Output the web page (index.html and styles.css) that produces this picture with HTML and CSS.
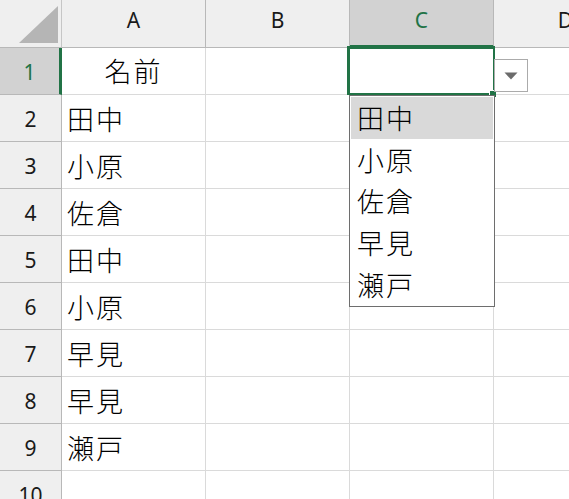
FILE: index.html
```html
<!DOCTYPE html>
<html lang="ja">
<head>
<meta charset="utf-8">
<title>Sheet</title>
<link rel="stylesheet" href="styles.css">
</head>
<body>
<div class="sheet">
  <div class="grid">
    <div class="cell corner"><svg class="corner-tri" width="61" height="47" viewBox="0 0 61 47"><polygon points="19,43 58,43 58,6" fill="#b5b5b5"/></svg></div>
    <div class="cell colhead">A</div>
    <div class="cell colhead">B</div>
    <div class="cell colhead sel">C</div>
    <div class="cell colhead">D</div>

    <div class="cell rowhead sel">1</div>
    <div class="cell center">名前</div>
    <div class="cell"></div>
    <div class="cell"></div>
    <div class="cell"></div>

    <div class="cell rowhead">2</div>
    <div class="cell">田中</div>
    <div class="cell"></div>
    <div class="cell"></div>
    <div class="cell"></div>

    <div class="cell rowhead">3</div>
    <div class="cell">小原</div>
    <div class="cell"></div>
    <div class="cell"></div>
    <div class="cell"></div>

    <div class="cell rowhead">4</div>
    <div class="cell">佐倉</div>
    <div class="cell"></div>
    <div class="cell"></div>
    <div class="cell"></div>

    <div class="cell rowhead">5</div>
    <div class="cell">田中</div>
    <div class="cell"></div>
    <div class="cell"></div>
    <div class="cell"></div>

    <div class="cell rowhead">6</div>
    <div class="cell">小原</div>
    <div class="cell"></div>
    <div class="cell"></div>
    <div class="cell"></div>

    <div class="cell rowhead">7</div>
    <div class="cell">早見</div>
    <div class="cell"></div>
    <div class="cell"></div>
    <div class="cell"></div>

    <div class="cell rowhead">8</div>
    <div class="cell">早見</div>
    <div class="cell"></div>
    <div class="cell"></div>
    <div class="cell"></div>

    <div class="cell rowhead">9</div>
    <div class="cell">瀬戸</div>
    <div class="cell"></div>
    <div class="cell"></div>
    <div class="cell"></div>

    <div class="cell rowhead">10</div>
    <div class="cell"></div>
    <div class="cell"></div>
    <div class="cell"></div>
    <div class="cell"></div>
  </div>

  <div class="selection"></div>
  <div class="fill-handle"></div>
  <div class="dd-button"><svg width="14" height="8" viewBox="0 0 14 8"><polygon points="0.5,0.5 13.5,0.5 7,7.5" fill="#6b6b6b"/></svg></div>
  <ul class="dd-list">
    <li class="dd-item active">田中</li>
    <li class="dd-item">小原</li>
    <li class="dd-item">佐倉</li>
    <li class="dd-item">早見</li>
    <li class="dd-item">瀬戸</li>
  </ul>
</div>
</body>
</html>
```

FILE: styles.css
```css
html, body {
  margin: 0;
  padding: 0;
  background: #ffffff;
}

body {
  font-family: "Noto Sans CJK JP", "Noto Sans", sans-serif;
  color: #000;
  overflow: hidden;
}

.sheet {
  position: relative;
  width: 569px;
  height: 499px;
  overflow: hidden;
}

.grid {
  display: grid;
  grid-template-columns: 62px 144px 144px 144px 144px;
  grid-template-rows: 48px repeat(10, 47px);
  width: 638px;
}

.cell {
  box-sizing: border-box;
  border-right: 1px solid #dadada;
  border-bottom: 1px solid #dadada;
  display: flex;
  align-items: center;
  padding-left: 5px;
  font-size: 27px;
  font-weight: 300;
  letter-spacing: 2px;
  line-height: 1;
  white-space: nowrap;
  overflow: hidden;
}

.cell.center {
  justify-content: center;
  padding-left: 0;
  padding-bottom: 2px;
}

.corner {
  background: #efefef;
  border-right-color: #c6c6c6;
  border-bottom-color: #b8b8b8;
  padding: 0;
  align-items: stretch;
}

.corner-tri {
  display: block;
}

.colhead,
.rowhead {
  background: #efefef;
  border-right-color: #b8b8b8;
  border-bottom-color: #b8b8b8;
  justify-content: center;
  padding: 0;
  font-family: "Noto Sans", "Open Sans", sans-serif;
  font-size: 21px;
  font-weight: 400;
  letter-spacing: 0;
  color: #1a1a1a;
}

.colhead {
  padding-bottom: 6px;
}

.rowhead {
  padding-top: 2px;
}

.colhead.sel {
  background: #d2d2d2;
  color: #217346;
  border-bottom: 3px solid #217346;
  padding-bottom: 4px;
}

.rowhead.sel {
  background: #d2d2d2;
  color: #217346;
  border-right: 3px solid #217346;
}

.selection {
  position: absolute;
  left: 347px;
  top: 46px;
  width: 148px;
  height: 49px;
  box-sizing: border-box;
  border: 2px solid #217346;
  border-left-width: 3px;
  border-top-width: 3px;
}

.fill-handle {
  position: absolute;
  left: 489px;
  top: 90px;
  width: 6px;
  height: 6px;
  background: #217346;
  border-left: 1px solid #fff;
  border-top: 1px solid #fff;
}

.dd-button {
  position: absolute;
  left: 494px;
  top: 59px;
  width: 34px;
  height: 33px;
  box-sizing: border-box;
  border: 1px solid #ababab;
  background: #fff;
  display: flex;
  align-items: center;
  justify-content: center;
  padding-top: 1px;
}

.dd-button svg {
  display: block;
}

.dd-list {
  position: absolute;
  left: 349px;
  top: 95px;
  width: 146px;
  box-sizing: border-box;
  margin: 0;
  padding: 1px;
  list-style: none;
  background: #fff;
  border: 1px solid #6e6e6e;
}

.dd-item {
  height: 41.6px;
  display: flex;
  align-items: center;
  padding-left: 6px;
  font-size: 27px;
  font-weight: 300;
  letter-spacing: 2px;
  line-height: 1;
}

.dd-item.active {
  background: #d9d9d9;
}
```
